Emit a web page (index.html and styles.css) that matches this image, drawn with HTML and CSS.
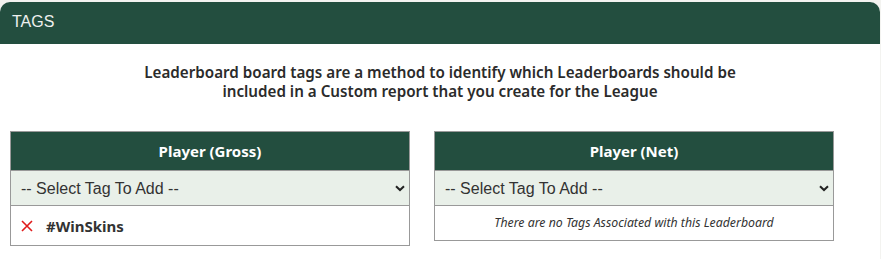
FILE: index.html
```html
<!DOCTYPE html>
<html lang="en">
<head>
    <meta charset="UTF-8">
    <meta name="viewport" content="width=device-width, initial-scale=1.0">
    <title>Tags</title>
    <link rel="stylesheet" href="styles.css">
</head>
<body>
    <div class="panel">
        <div class="panel-heading">TAGS</div>
        <div class="panel-body">
            <p class="intro">Leaderboard board tags are a method to identify which Leaderboards should be<br>included in a Custom report that you create for the League</p>
            <div class="tag-groups">
                <div class="tag-box">
                    <div class="tag-title">Player (Gross)</div>
                    <div class="tag-select">
                        <select>
                            <option>-- Select Tag To Add --</option>
                        </select>
                        <svg class="chevron" width="10" height="7" viewBox="0 0 10 7"><path d="M1 1.2 L5 5 L9 1.2" fill="none" stroke="#222" stroke-width="2"/></svg>
                    </div>
                    <div class="tag-row">
                        <svg class="remove" width="12" height="12" viewBox="0 0 12 12"><path d="M1 1 L11 11 M11 1 L1 11" stroke="#e01b1b" stroke-width="1.6"/></svg>
                        <span class="tag-name">#WinSkins</span>
                    </div>
                </div>
                <div class="tag-box">
                    <div class="tag-title">Player (Net)</div>
                    <div class="tag-select">
                        <select>
                            <option>-- Select Tag To Add --</option>
                        </select>
                        <svg class="chevron" width="10" height="7" viewBox="0 0 10 7"><path d="M1 1.2 L5 5 L9 1.2" fill="none" stroke="#222" stroke-width="2"/></svg>
                    </div>
                    <div class="tag-empty">There are no Tags Associated with this Leaderboard</div>
                </div>
            </div>
        </div>
    </div>
</body>
</html>
```

FILE: styles.css
```css
body {
    margin: 0;
    padding-top: 2px;
    background-color: #f3f3f0;
    font-family: "Noto Sans", Arial, sans-serif;
    color: #333;
}
.panel {
    width: 880px;
    height: 257px;
    background-color: #fff;
    border-radius: 10px 10px 0 0;
}
.panel-heading {
    height: 42px;
    padding-left: 12px;
    line-height: 40px;
    background-color: #234e3f;
    color: #eef0ee;
    font-family: "Liberation Sans", Arial, sans-serif;
    font-size: 16px;
    border-radius: 10px 10px 0 0;
}
.intro {
    margin: 19px 0 0;
    text-align: center;
    font-size: 15.2px;
    font-weight: 600;
    line-height: 19px;
    color: #2b2b2b;
}
.tag-groups {
    display: flex;
    gap: 24px;
    padding-left: 10px;
    margin-top: 30px;
    align-items: flex-start;
}
.tag-box {
    width: 398px;
    border: 1px solid #999;
}
.tag-title {
    height: 38px;
    line-height: 38px;
    text-align: center;
    background-color: #234e3f;
    color: #fff;
    font-size: 15px;
    font-weight: 700;
    border-bottom: 1px solid #999;
}
.tag-select {
    position: relative;
    height: 34px;
    background-color: #e9f0e9;
    border-bottom: 1px solid #999;
}
.tag-select select {
    appearance: none;
    width: 100%;
    height: 34px;
    padding: 0 0 0 10px;
    border: none;
    background: transparent;
    font-family: "Liberation Sans", Arial, sans-serif;
    font-size: 16px;
    color: #333;
}
.chevron {
    position: absolute;
    right: 4px;
    top: 14px;
    pointer-events: none;
}
.tag-row {
    display: flex;
    align-items: center;
    height: 39px;
    padding-left: 10px;
}
.remove {
    margin-right: 13px;
}
.tag-name {
    font-size: 15px;
    font-weight: 700;
    color: #333;
}
.tag-empty {
    height: 34px;
    line-height: 33px;
    text-align: center;
    font-size: 12.3px;
    font-style: italic;
    color: #333;
}
```
